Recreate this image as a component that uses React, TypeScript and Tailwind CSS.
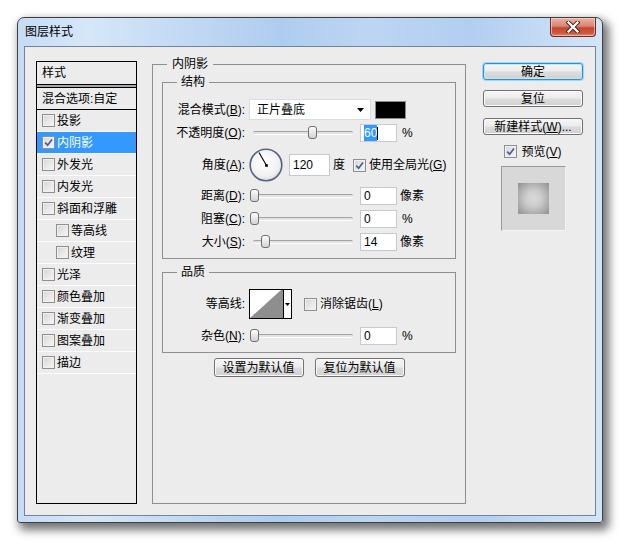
import React from "react";

function Check({ checked }: { checked?: boolean }) {
  return (
    <span className="inline-flex w-[13px] h-[13px] shrink-0 items-center justify-center border border-[#8e8f8f] bg-[linear-gradient(135deg,#d6d6d6,#f7f7f7)] shadow-[inset_0_0_0_1px_#f0f0f0]">
      {checked && (
        <svg width="9" height="9" viewBox="0 0 9 9">
          <path d="M1.2 4.6 L3.6 7.2 L8 1.4" stroke="#4a5e9a" strokeWidth="1.7" fill="none" />
        </svg>
      )}
    </span>
  );
}

function M({ t, k, colon = true }: { t: string; k: string; colon?: boolean }) {
  return (
    <>
      {t}(<span className="underline">{k}</span>){colon ? ":" : ""}
    </>
  );
}

function Slider({ thumb }: { thumb: string }) {
  return (
    <div className="relative ml-[4px] h-[14px] w-[104px] shrink-0">
      <div className="absolute left-[4px] right-0 top-[5px] h-[4px] rounded-[2px] border-t border-b border-t-[#a2a2a2] border-b-white bg-[#e2e2e2]" />
      <div
        className={
          "absolute top-0 h-[13px] w-[9px] rounded-[3px] border border-[#6f6f6f] bg-[linear-gradient(#fdfdfd,#d2d2d2)] " +
          thumb
        }
      />
    </div>
  );
}

function Input({ children, w = "w-[37px]", h = "h-[18px]" }: { children: React.ReactNode; w?: string; h?: string }) {
  return (
    <div className={"flex shrink-0 items-center border border-[#c6cad0] bg-white pl-[3px] text-[12px] " + w + " " + h}>
      {children}
    </div>
  );
}

function Btn({ children, w = "w-[90px]", h = "h-[19px]", focus }: { children: React.ReactNode; w?: string; h?: string; focus?: boolean }) {
  return (
    <div
      className={
        "flex items-center justify-center rounded-[3px] border text-[12px] leading-none text-black bg-[linear-gradient(#f6f6f6_0%,#ececec_45%,#dcdcdc_55%,#d0d0d0_100%)] " +
        (focus
          ? "border-[#2f8fd8] shadow-[0_0_0_1px_#9ad6f8,inset_0_0_0_1px_#bfe6fb] "
          : "border-[#707070] shadow-[inset_0_0_0_1px_#fbfbfb] ") +
        w +
        " " +
        h
      }
    >
      {children}
    </div>
  );
}

const items: { label: string; indent?: boolean; checked?: boolean; selected?: boolean }[] = [
  { label: "投影" },
  { label: "内阴影", checked: true, selected: true },
  { label: "外发光" },
  { label: "内发光" },
  { label: "斜面和浮雕" },
  { label: "等高线", indent: true },
  { label: "纹理", indent: true },
  { label: "光泽" },
  { label: "颜色叠加" },
  { label: "渐变叠加" },
  { label: "图案叠加" },
  { label: "描边" },
];

function Label({ children }: { children: React.ReactNode }) {
  return <div className="w-[82px] shrink-0 whitespace-nowrap text-right">{children}</div>;
}

export default function App() {
  return (
    <div className="h-[549px] w-[626px] bg-white pl-[17px] pt-[17px] font-['Liberation_Sans','Noto_Sans_CJK_SC',sans-serif] text-[12px] leading-[16px] text-black">
      <div className="flex h-[506px] w-[586px] flex-col rounded-t-[7px] rounded-b-[3px] border border-[#3c3f44] bg-[linear-gradient(90deg,#c6dcf4_0%,#d6e7f8_12%,#c0d8f2_30%,#aecdee_45%,#bcd6f2_60%,#b2cff0_78%,#d3e5f8_100%)] shadow-[4px_5px_10px_2px_rgba(0,0,0,0.55)]">
        {/* title bar */}
        <div className="flex h-[28px] shrink-0 items-start justify-between">
          <div className="pl-[7px] pt-[6px] text-[12px]">图层样式</div>
          <div className="mr-[6px] flex h-[19px] w-[46px] items-center justify-center rounded-b-[4px] border border-t-0 border-[#6b2a22] bg-[linear-gradient(#eab1a4_0%,#d98672_45%,#c3462f_55%,#cf5a40_85%,#e08c6f_100%)] shadow-[inset_0_0_0_1px_rgba(255,220,210,0.6)]">
            <svg width="14" height="12" viewBox="0 0 14 12">
              <path d="M2.5 1.5 L11.5 10.5 M11.5 1.5 L2.5 10.5" stroke="#4a2a26" strokeWidth="4.2" strokeLinecap="square" />
              <path d="M2.5 1.5 L11.5 10.5 M11.5 1.5 L2.5 10.5" stroke="#ffffff" strokeWidth="2.2" strokeLinecap="square" />
            </svg>
          </div>
        </div>
        {/* client */}
        <div className="mx-[6px] mb-[6px] flex h-[470px] items-start border border-[#73839a] bg-[#ececec] pl-[11px]">
          {/* left list */}
          <div className="mt-[14px] flex h-[443px] w-[101px] shrink-0 flex-col border border-black">
            <div className="flex h-[22px] items-center pl-[5px]">样式</div>
            <div className="h-[4px] border-y border-black bg-[#a8a8a8]" />
            <div className="flex h-[22px] items-center border-b border-black pl-[5px]">混合选项:自定</div>
            {items.map((it) => (
              <div
                key={it.label}
                className={
                  "flex h-[22px] items-center gap-[2px] border-b border-[#fbfbfb] " +
                  (it.indent ? "pl-[19px] " : "pl-[5px] ") +
                  (it.selected ? "bg-[#3399ff] text-white" : "")
                }
              >
                <Check checked={it.checked} />
                <span>{it.label}</span>
              </div>
            ))}
          </div>

          {/* middle */}
          <fieldset className="ml-[15px] mt-[9px] h-[448px] w-[314px] shrink-0 border border-[#8f8f8f]">
            <legend className="ml-[14px] px-[5px] leading-[16px]">内阴影</legend>

            <fieldset className="ml-[9px] mt-[2px] w-[294px] border border-[#8f8f8f] pb-[7px]">
              <legend className="ml-[14px] px-[4px] leading-[16px]">结构</legend>
              <div className="mt-[9px] flex h-[21px] items-center">
                <Label>
                  <M t="混合模式" k="B" />
                </Label>
                <div className="ml-[4px] flex h-[21px] w-[122px] shrink-0 items-center justify-between border border-[#d9dce0] bg-white pl-[7px] pr-[6px]">
                  <span>正片叠底</span>
                  <svg width="7" height="4" viewBox="0 0 7 4">
                    <path d="M0 0 H7 L3.5 4 Z" fill="#000" />
                  </svg>
                </div>
                <div className="ml-[4px] h-[18px] w-[31px] border border-[#8a8a8a] bg-black" />
              </div>

              <div className="mt-[4px] flex h-[18px] items-center">
                <Label>
                  <M t="不透明度" k="O" />
                </Label>
                <Slider thumb="left-[59px]" />
                <div className="ml-[7px]">
                  <Input>
                    <span className="flex items-center">
                      <span className="bg-[#3399ff] text-white">60</span>
                      <span className="h-[13px] w-px bg-black" />
                    </span>
                  </Input>
                </div>
                <span className="ml-[5px]">%</span>
              </div>

              <div className="mt-[6px] flex h-[34px] items-center">
                <Label>
                  <M t="角度" k="A" />
                </Label>
                <svg className="ml-[4px] shrink-0" width="34" height="34" viewBox="0 0 34 34">
                  <defs>
                    <radialGradient id="dialg" cx="45%" cy="40%" r="65%">
                      <stop offset="0" stopColor="#ffffff" />
                      <stop offset="0.7" stopColor="#f1f1f1" />
                      <stop offset="1" stopColor="#d4d4d4" />
                    </radialGradient>
                  </defs>
                  <circle cx="17" cy="17" r="15.8" fill="url(#dialg)" stroke="#56637e" strokeWidth="1.6" />
                  <line x1="17.5" y1="17.5" x2="10" y2="4.5" stroke="#000" strokeWidth="1.1" />
                  <rect x="16.2" y="16.2" width="2.6" height="2.6" fill="#000" />
                </svg>
                <div className="ml-[6px]">
                  <Input w="w-[41px]" h="h-[22px]">
                    120
                  </Input>
                </div>
                <span className="ml-[3px]">度</span>
                <span className="ml-[8px] flex items-center gap-[3px]">
                  <Check checked />
                  <span>
                    <M t="使用全局光" k="G" colon={false} />
                  </span>
                </span>
              </div>

              <div className="mt-[5px] flex h-[18px] items-center">
                <Label>
                  <M t="距离" k="D" />
                </Label>
                <Slider thumb="left-[1px]" />
                <div className="ml-[7px]">
                  <Input>0</Input>
                </div>
                <span className="ml-[3px]">像素</span>
              </div>

              <div className="mt-[5px] flex h-[18px] items-center">
                <Label>
                  <M t="阻塞" k="C" />
                </Label>
                <Slider thumb="left-[1px]" />
                <div className="ml-[7px]">
                  <Input>0</Input>
                </div>
                <span className="ml-[5px]">%</span>
              </div>

              <div className="mt-[5px] flex h-[18px] items-center">
                <Label>
                  <M t="大小" k="S" />
                </Label>
                <Slider thumb="left-[12px]" />
                <div className="ml-[7px]">
                  <Input>14</Input>
                </div>
                <span className="ml-[3px]">像素</span>
              </div>
            </fieldset>

            <fieldset className="ml-[9px] mt-[5px] w-[294px] border border-[#8f8f8f] pb-[7px]">
              <legend className="ml-[14px] px-[4px] leading-[16px]">品质</legend>
              <div className="mt-[9px] flex h-[30px] items-center">
                <Label>等高线:</Label>
                <div className="ml-[4px] flex h-[30px] w-[43px] shrink-0 border border-black bg-white">
                  <svg width="33" height="28" viewBox="0 0 33 28" className="shrink-0">
                    <polygon points="0,28 31,0 33,0 33,28" fill="#8e8e8e" />
                  </svg>
                  <div className="flex flex-1 items-center justify-center border-l border-black">
                    <svg width="5" height="3" viewBox="0 0 5 3">
                      <path d="M0 0 H5 L2.5 3 Z" fill="#000" />
                    </svg>
                  </div>
                </div>
                <span className="ml-[12px] flex items-center gap-[3px]">
                  <Check />
                  <span>
                    <M t="消除锯齿" k="L" colon={false} />
                  </span>
                </span>
              </div>
              <div className="mt-[8px] flex h-[18px] items-center">
                <Label>
                  <M t="杂色" k="N" />
                </Label>
                <Slider thumb="left-[1px]" />
                <div className="ml-[7px]">
                  <Input>0</Input>
                </div>
                <span className="ml-[5px]">%</span>
              </div>
            </fieldset>

            <div className="mt-[5px] flex justify-center gap-[11px]">
              <Btn>设置为默认值</Btn>
              <Btn>复位为默认值</Btn>
            </div>
          </fieldset>

          {/* right column */}
          <div className="ml-[17px] mt-[16px] flex w-[100px] shrink-0 flex-col items-center">
            <Btn w="w-[100px]" h="h-[17px]" focus>
              确定
            </Btn>
            <div className="mt-[10px]">
              <Btn w="w-[100px]" h="h-[17px]">
                复位
              </Btn>
            </div>
            <div className="mt-[11px]">
              <Btn w="w-[100px]" h="h-[17px]">
                新建样式(<span className="underline">W</span>)...
              </Btn>
            </div>
            <div className="mt-[10px] flex h-[13px] items-center gap-[4px]">
              <Check checked />
              <span>
                预览(<span className="underline">V</span>)
              </span>
            </div>
            <div className="mt-[8px] flex h-[65px] w-[65px] items-center justify-center border border-t-[#9a9a9a] border-l-[#9a9a9a] border-r-[#f2f2f2] border-b-[#f2f2f2] bg-[#d8d8d8]">
              <div className="h-[31px] w-[31px] bg-[radial-gradient(circle,#d9d9d9_0%,#cdcdcd_35%,#a4a4a4_80%,#8f8f8f_100%)]" />
            </div>
          </div>
        </div>
      </div>
    </div>
  );
}
